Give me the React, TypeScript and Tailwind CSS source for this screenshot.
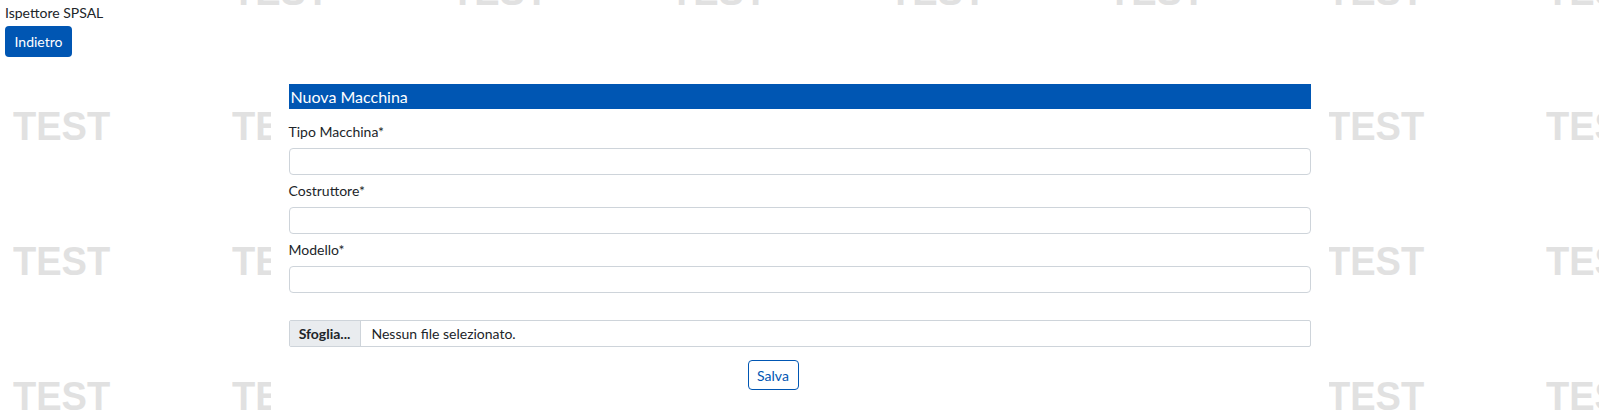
import React from "react";

const Watermark = () => {
  const cells = Array.from({ length: 32 });
  return (
    <div className="pointer-events-none absolute left-[13px] top-[-29px] grid grid-cols-[repeat(8,219px)] auto-rows-[135px]">
      {cells.map((_, i) => (
        <div key={i} className="h-[135px]">
          <span className="inline-block origin-left scale-x-[0.95] font-['Liberation_Sans',Arial,sans-serif] text-[40px] font-bold leading-none text-[#e1e1e1]">
            TEST
          </span>
        </div>
      ))}
    </div>
  );
};

const Field = ({ label, first }: { label: string; first?: boolean }) => (
  <div className={first ? "mt-[12px]" : "mt-[5px]"}>
    <div className="text-[14px] leading-[21px] text-[#212529]">{label}</div>
    <div className="mt-[6px] h-[27px] rounded-[4px] border border-[#ced4da] bg-white" />
  </div>
);

export default function App() {
  return (
    <div className="relative h-[415px] w-full overflow-hidden bg-white font-['Lato','Noto_Sans',sans-serif] text-[#212529]">
      <Watermark />
      <div className="relative">
        <div className="w-[200px] bg-white pl-[5px] pt-[3px]">
          <div className="text-[14px] leading-[20px]">Ispettore SPSAL</div>
          <button className="mt-[3px] flex h-[31px] w-[67px] items-center justify-center rounded-[4px] bg-[#0056b3] text-[14px] text-white">
            Indietro
          </button>
        </div>
        <div className="mx-auto mt-[27px] w-[1058px] bg-white px-[18px] pb-[40px]">
          <div className="h-[25px] bg-[#0056b3] pl-[2px] text-[16px] leading-[25px] text-white">
            Nuova Macchina
          </div>
          <Field label="Tipo Macchina*" first />
          <Field label="Costruttore*" />
          <Field label="Modello*" />
          <div className="mt-[27px] flex h-[27px] items-stretch rounded-[2px] border border-[#ced4da] bg-white text-[14px]">
            <div className="flex w-[71px] items-center justify-center border-r border-[#ced4da] bg-[#e9ecef] font-bold text-[#212529]">
              Sfoglia...
            </div>
            <div className="flex items-center pl-[11px] text-[#212529]">Nessun file selezionato.</div>
          </div>
          <div className="mt-[13px] pl-[459px]">
            <button className="flex h-[30px] w-[51px] items-center justify-center rounded-[4px] border border-[#0056b3] bg-white text-[14px] text-[#0056b3]">
              Salva
            </button>
          </div>
        </div>
      </div>
    </div>
  );
}
